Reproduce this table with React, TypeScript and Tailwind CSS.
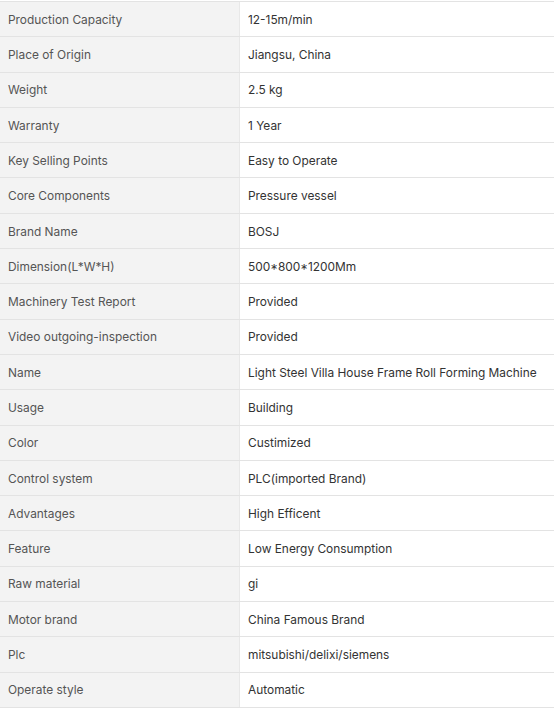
import React from "react";

const rows: [string, string][] = [
  ["Production Capacity", "12-15m/min"],
  ["Place of Origin", "Jiangsu, China"],
  ["Weight", "2.5 kg"],
  ["Warranty", "1 Year"],
  ["Key Selling Points", "Easy to Operate"],
  ["Core Components", "Pressure vessel"],
  ["Brand Name", "BOSJ"],
  ["Dimension(L*W*H)", "500*800*1200Mm"],
  ["Machinery Test Report", "Provided"],
  ["Video outgoing-inspection", "Provided"],
  ["Name", "Light Steel Villa House Frame Roll Forming Machine"],
  ["Usage", "Building"],
  ["Color", "Custimized"],
  ["Control system", "PLC(imported Brand)"],
  ["Advantages", "High Efficent"],
  ["Feature", "Low Energy Consumption"],
  ["Raw material", "gi"],
  ["Motor brand", "China Famous Brand"],
  ["Plc", "mitsubishi/delixi/siemens"],
  ["Operate style", "Automatic"],
];

export default function App() {
  return (
    <div className="w-[554px] h-[712px] bg-white pt-px" style={{ fontFamily: "Inter, 'Liberation Sans', sans-serif" }}>
      <div className="w-[554px] border-t border-[#e3e3e3]">
        {rows.map(([k, v]) => (
          <div key={k} className="flex h-[35.3px] border-b border-[#e3e3e3] text-[11.9px]">
            <div className="w-[240px] shrink-0 bg-[#f3f3f3] border-r border-[#e8e8e8] flex items-center pl-2 pt-px text-[#555555]">
              {k}
            </div>
            <div className="flex-1 flex items-center pl-[8px] pt-px text-[#333333]">{v}</div>
          </div>
        ))}
      </div>
    </div>
  );
}
